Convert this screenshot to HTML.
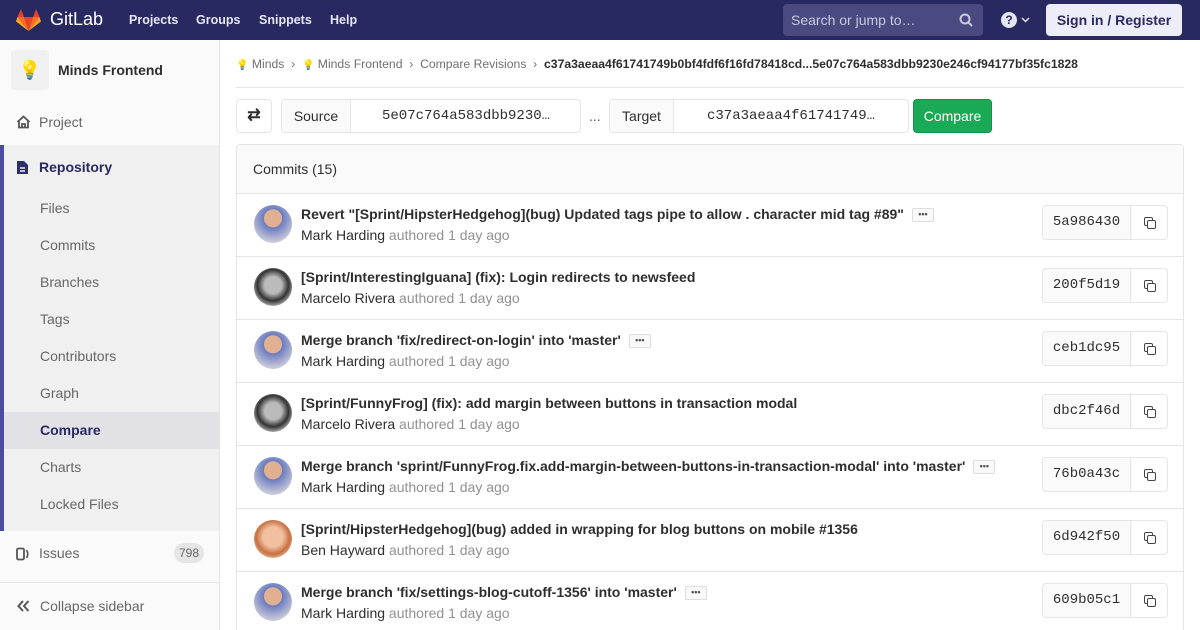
<!DOCTYPE html>
<html><head><meta charset="utf-8"><style>
*{box-sizing:border-box;margin:0;padding:0}
html,body{width:1200px;height:630px;overflow:hidden}
body{font-family:"Liberation Sans",sans-serif;font-size:14px;color:#2e2e2e;background:#fff;position:relative}
.hdr{position:absolute;top:0;left:0;width:1200px;height:40px;background:#292961;color:#fff}
.hdr .nav{position:absolute;top:13px;font-weight:bold;font-size:12.5px;color:#e6e6f2}
.search{position:absolute;left:783px;top:4px;width:200px;height:32px;background:#4a4a80;border-radius:4px;color:#c8c8e0;font-size:14px;padding:8px 8px}
.sign{position:absolute;left:1046px;top:4px;width:136px;height:32px;background:#ededfa;border-radius:4px;color:#292961;font-weight:bold;font-size:14px;text-align:center;line-height:32px}
.side{position:absolute;top:40px;left:0;width:220px;height:590px;background:#fafafa;border-right:1px solid #e5e5e5}
.side .it{position:absolute;left:40px;color:#666;font-size:14px}
.repo{position:absolute;left:0;top:105px;width:219px;height:386px;background:#f0f0f0;border-left:4px solid #4b4ba3}
.main{position:absolute;left:236px;top:40px;width:948px;height:590px}
.bc{position:absolute;top:17px;left:0;font-size:12.2px;color:#707070;white-space:nowrap}
.btn{position:absolute;border:1px solid #e5e5e5;border-radius:4px;background:#fff}
.row{position:absolute;left:0;width:948px;height:63px;border-top:1px solid #e5e5e5}
.av{position:absolute;left:17px;top:11px;width:38px;height:38px;border-radius:50%}
.t{position:absolute;left:64px;top:12px;font-weight:bold;font-size:14px;color:#2e2e2e;white-space:nowrap}
.a{position:absolute;left:64px;top:33px;font-size:14px;color:#2e2e2e;white-space:nowrap}
.a span{color:#919191}
.dots{display:inline-block;margin-left:8px;border:1px solid #ddd;border-radius:2px;width:22px;height:14px;font-size:9px;line-height:10px;text-align:center;vertical-align:2px;color:#555;background:#fafafa}
.sha{position:absolute;left:805px;top:11px;width:126px;height:35px;border:1px solid #e5e5e5;border-radius:4px;background:#fafafa}
.sha b{position:absolute;left:0;width:88px;top:0;height:33px;line-height:33px;text-align:center;font-family:"Liberation Mono",monospace;font-weight:normal;font-size:14px;border-right:1px solid #e5e5e5}
.sha i{position:absolute;left:89px;width:35px;height:33px;background:#fff;border-radius:0 4px 4px 0}
.sha i:before{content:"";position:absolute;left:12px;top:11px;width:7px;height:7px;border:1.5px solid #444;border-radius:2px}
.sha i:after{content:"";position:absolute;left:15px;top:14px;width:7px;height:7px;border:1.5px solid #444;border-radius:2px;background:#fff}
</style></head><body>
<div class="hdr">
<svg style="position:absolute;left:16px;top:9px" width="25" height="22" viewBox="0 0 25 22"><path d="M12.5 22 L17 8 H8Z" fill="#e24329"/><path d="M12.5 22 L8 8 H1.5Z" fill="#fc6d26"/><path d="M1.5 8 L0 12.5 L12.5 22Z" fill="#fca326"/><path d="M1.5 8 H8 L5 0Z" fill="#e24329"/><path d="M12.5 22 L17 8 H23.5Z" fill="#fc6d26"/><path d="M23.5 8 L25 12.5 L12.5 22Z" fill="#fca326"/><path d="M23.5 8 H17 L20 0Z" fill="#e24329"/></svg>
<div style="position:absolute;left:50px;top:9px;font-size:18px;color:#fff">GitLab</div>
<div class="nav" style="left:129px">Projects</div>
<div class="nav" style="left:196px">Groups</div>
<div class="nav" style="left:259px">Snippets</div>
<div class="nav" style="left:330px">Help</div>
<div class="search">Search or jump to…<svg style="position:absolute;right:10px;top:9px" width="14" height="14" viewBox="0 0 14 14"><circle cx="6" cy="6" r="4.5" stroke="#c8c8e0" stroke-width="2" fill="none"/><path d="M9 9 L13 13" stroke="#c8c8e0" stroke-width="2"/></svg></div>
<div style="position:absolute;left:1001px;top:12px;width:16px;height:16px;border-radius:50%;background:#e6e6f2;color:#292961;font-weight:bold;font-size:12px;text-align:center;line-height:16px">?</div>
<svg style="position:absolute;left:1021px;top:17px" width="9" height="6" viewBox="0 0 9 6"><path d="M1 1 L4.5 4.5 L8 1" stroke="#e6e6f2" stroke-width="1.5" fill="none"/></svg>
<div class="sign">Sign in / Register</div>
</div>
<div class="side">
<div style="position:absolute;left:11px;top:10px;width:38px;height:40px;background:#f0f0f0;border-radius:4px;text-align:center;line-height:40px;font-size:18px">💡</div>
<div style="position:absolute;left:58px;top:22px;font-weight:bold;font-size:14px;color:#2e2e2e">Minds Frontend</div>
<svg style="position:absolute;left:16px;top:75px" width="15" height="14" viewBox="0 0 15 14"><path d="M1.5 7 L7.5 1.5 L13.5 7 M3 6 V12.5 H12 V6 M6 12.5 V9 H9 V12.5" stroke="#555" stroke-width="1.8" fill="none"/></svg>
<div class="it" style="left:39px;top:74px">Project</div>
<div class="repo">
<svg style="position:absolute;left:12px;top:15px" width="13" height="15" viewBox="0 0 13 15"><path d="M1 1 H8 L12 5 V14 H1Z" fill="#2e2e6a"/><path d="M4 8 H9 M4 11 H9" stroke="#f0f0f0" stroke-width="1.4"/></svg>
<div style="position:absolute;left:35px;top:14px;font-weight:bold;color:#292961">Repository</div>
<div class="it" style="left:36px;top:55px">Files</div>
<div class="it" style="left:36px;top:92px">Commits</div>
<div class="it" style="left:36px;top:129px">Branches</div>
<div class="it" style="left:36px;top:166px">Tags</div>
<div class="it" style="left:36px;top:203px">Contributors</div>
<div class="it" style="left:36px;top:240px">Graph</div>
<div style="position:absolute;left:0;top:267px;width:215px;height:37px;background:#e1e1e6"></div>
<div class="it" style="left:36px;top:277px;font-weight:bold;color:#292961">Compare</div>
<div class="it" style="left:36px;top:314px">Charts</div>
<div class="it" style="left:36px;top:351px">Locked Files</div>
</div>
<svg style="position:absolute;left:16px;top:507px" width="14" height="14" viewBox="0 0 14 14"><rect x="1" y="1.5" width="7" height="11" rx="1.5" stroke="#555" stroke-width="1.8" fill="none"/><path d="M10.5 3 Q13 7 10.5 11" stroke="#555" stroke-width="1.6" fill="none"/></svg>
<div class="it" style="left:39px;top:505px">Issues</div>
<div style="position:absolute;left:174px;top:503px;width:30px;height:20px;border-radius:10px;background:#e5e5e5;color:#666;font-size:12px;text-align:center;line-height:20px">798</div>
<div style="position:absolute;left:0;top:542px;width:219px;border-top:1px solid #e5e5e5"></div>
<svg style="position:absolute;left:17px;top:560px" width="13" height="12" viewBox="0 0 13 12"><path d="M6 1 L1.5 6 L6 11 M11.5 1 L7 6 L11.5 11" stroke="#555" stroke-width="2" fill="none"/></svg>
<div class="it" style="left:40px;top:558px">Collapse sidebar</div>
</div>
<div class="main">
<div class="bc"><span style="font-size:10px">💡</span> Minds &nbsp;›&nbsp; <span style="font-size:10px">💡</span> Minds Frontend &nbsp;›&nbsp; Compare Revisions &nbsp;›&nbsp; <b style="color:#2e2e2e">c37a3aeaa4f61741749b0bf4fdf6f16fd78418cd...5e07c764a583dbb9230e246cf94177bf35fc1828</b></div>
<div style="position:absolute;top:47px;left:0;width:948px;border-top:1px solid #e5e5e5"></div>
<div class="btn" style="left:0;top:59px;width:36px;height:34px;text-align:center;line-height:32px;font-size:16px;font-weight:bold">⇄</div>
<div class="btn" style="left:45px;top:59px;width:300px;height:34px;overflow:hidden"><div style="position:absolute;left:0;top:0;width:69px;height:32px;background:#fafafa;border-right:1px solid #e5e5e5;text-align:center;line-height:32px">Source</div><div style="position:absolute;left:100px;top:8px;font-family:'Liberation Mono',monospace">5e07c764a583dbb9230…</div></div>
<div style="position:absolute;left:353px;top:68px;color:#555">...</div>
<div class="btn" style="left:373px;top:59px;width:300px;height:34px;overflow:hidden"><div style="position:absolute;left:0;top:0;width:64px;height:32px;background:#fafafa;border-right:1px solid #e5e5e5;text-align:center;line-height:32px">Target</div><div style="position:absolute;left:97px;top:8px;font-family:'Liberation Mono',monospace">c37a3aeaa4f61741749…</div></div>
<div style="position:absolute;left:677px;top:59px;width:79px;height:34px;background:#1aaa55;border:1px solid #168f48;border-radius:4px;color:#fff;text-align:center;line-height:32px">Compare</div>
<div style="position:absolute;left:0;top:104px;width:948px;height:500px;border:1px solid #e5e5e5;border-radius:4px;overflow:hidden">
<div style="height:48px;background:#fafafa;padding:16px;font-size:14px">Commits (15)</div>
<div class="row" style="top:48px"><div class="av" style="background:radial-gradient(circle at 50% 35%,#e0b090 28%,#6a7bc0 30%,#c8c8d8 75%)"></div><div class="t">Revert "[Sprint/HipsterHedgehog](bug) Updated tags pipe to allow . character mid tag #89"<span class="dots">•••</span></div><div class="a">Mark Harding <span>authored 1 day ago</span></div><div class="sha"><b>5a986430</b><i></i></div></div>
<div class="row" style="top:111px"><div class="av" style="background:radial-gradient(circle at 50% 45%,#bbb 30%,#333 55%,#ccc 80%)"></div><div class="t">[Sprint/InterestingIguana] (fix): Login redirects to newsfeed</div><div class="a">Marcelo Rivera <span>authored 1 day ago</span></div><div class="sha"><b>200f5d19</b><i></i></div></div>
<div class="row" style="top:174px"><div class="av" style="background:radial-gradient(circle at 50% 35%,#e0b090 28%,#6a7bc0 30%,#c8c8d8 75%)"></div><div class="t">Merge branch 'fix/redirect-on-login' into 'master'<span class="dots">•••</span></div><div class="a">Mark Harding <span>authored 1 day ago</span></div><div class="sha"><b>ceb1dc95</b><i></i></div></div>
<div class="row" style="top:237px"><div class="av" style="background:radial-gradient(circle at 50% 45%,#bbb 30%,#333 55%,#ccc 80%)"></div><div class="t">[Sprint/FunnyFrog] (fix): add margin between buttons in transaction modal</div><div class="a">Marcelo Rivera <span>authored 1 day ago</span></div><div class="sha"><b>dbc2f46d</b><i></i></div></div>
<div class="row" style="top:300px"><div class="av" style="background:radial-gradient(circle at 50% 35%,#e0b090 28%,#6a7bc0 30%,#c8c8d8 75%)"></div><div class="t">Merge branch 'sprint/FunnyFrog.fix.add-margin-between-buttons-in-transaction-modal' into 'master'<span class="dots">•••</span></div><div class="a">Mark Harding <span>authored 1 day ago</span></div><div class="sha"><b>76b0a43c</b><i></i></div></div>
<div class="row" style="top:363px"><div class="av" style="background:radial-gradient(circle at 50% 45%,#f0c0a0 35%,#c87040 60%,#e8d8c8 85%)"></div><div class="t">[Sprint/HipsterHedgehog](bug) added in wrapping for blog buttons on mobile #1356</div><div class="a">Ben Hayward <span>authored 1 day ago</span></div><div class="sha"><b>6d942f50</b><i></i></div></div>
<div class="row" style="top:426px"><div class="av" style="background:radial-gradient(circle at 50% 35%,#e0b090 28%,#6a7bc0 30%,#c8c8d8 75%)"></div><div class="t">Merge branch 'fix/settings-blog-cutoff-1356' into 'master'<span class="dots">•••</span></div><div class="a">Mark Harding <span>authored 1 day ago</span></div><div class="sha"><b>609b05c1</b><i></i></div></div>
</div>
</div>
</body></html>
